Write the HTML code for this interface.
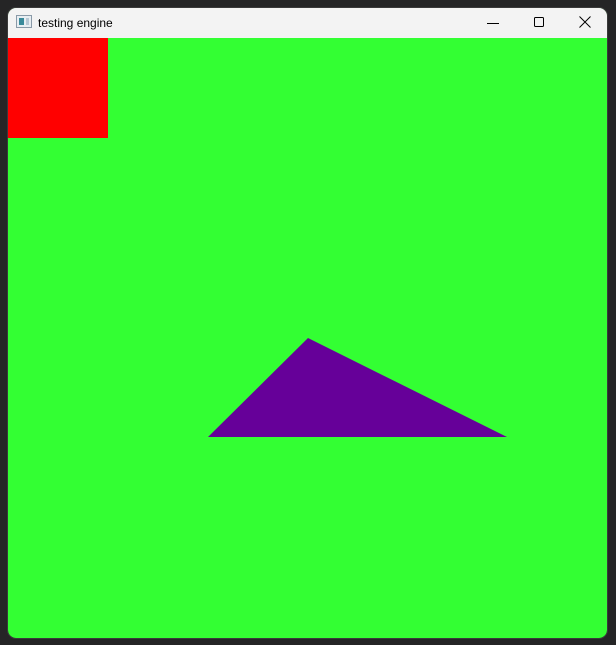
<!DOCTYPE html>
<html><head><style>
body{margin:0;width:616px;height:645px;background:#252526;position:relative;overflow:hidden;font-family:"Liberation Sans",sans-serif}
.win{position:absolute;left:8px;top:8px;width:599px;height:630px;border-radius:8px;overflow:hidden;background:#33ff33;outline:1px solid #3a3a3a}
.tb{position:absolute;left:0;top:0;width:100%;height:30px;background:#f3f3f3}
.t{position:absolute;left:30px;top:8px;font-size:12px;color:#000}
.red{position:absolute;left:0;top:30px;width:100px;height:100px;background:#ff0000}
</style></head><body>
<div class="win">
<div class="tb">
<svg style="position:absolute;left:8px;top:7px" width="16" height="14"><rect x="0.5" y="0.5" width="15" height="12" fill="#e8eef2" stroke="#8a9aa8"/><rect x="3" y="3" width="5" height="7" fill="#3a8a9a"/><rect x="10" y="3" width="3" height="7" fill="#b8c8d4"/></svg>
<div class="t">testing engine</div>
<svg style="position:absolute;left:478px;top:8px" width="14" height="14"><line x1="1" y1="7.5" x2="13" y2="7.5" stroke="#000"/></svg>
<svg style="position:absolute;left:524px;top:8px" width="14" height="14"><rect x="2.5" y="1.5" width="9" height="9" fill="none" stroke="#000" rx="1"/></svg>
<svg style="position:absolute;left:570px;top:7px" width="14" height="14"><path d="M1.5 1.5L12.5 12.5M12.5 1.5L1.5 12.5" stroke="#000"/></svg>
</div>
<div class="red"></div>
<svg style="position:absolute;left:0;top:0" width="599" height="630"><polygon points="200,429 300,330 499,429" fill="#660099"/></svg>
</div>
</body></html>
